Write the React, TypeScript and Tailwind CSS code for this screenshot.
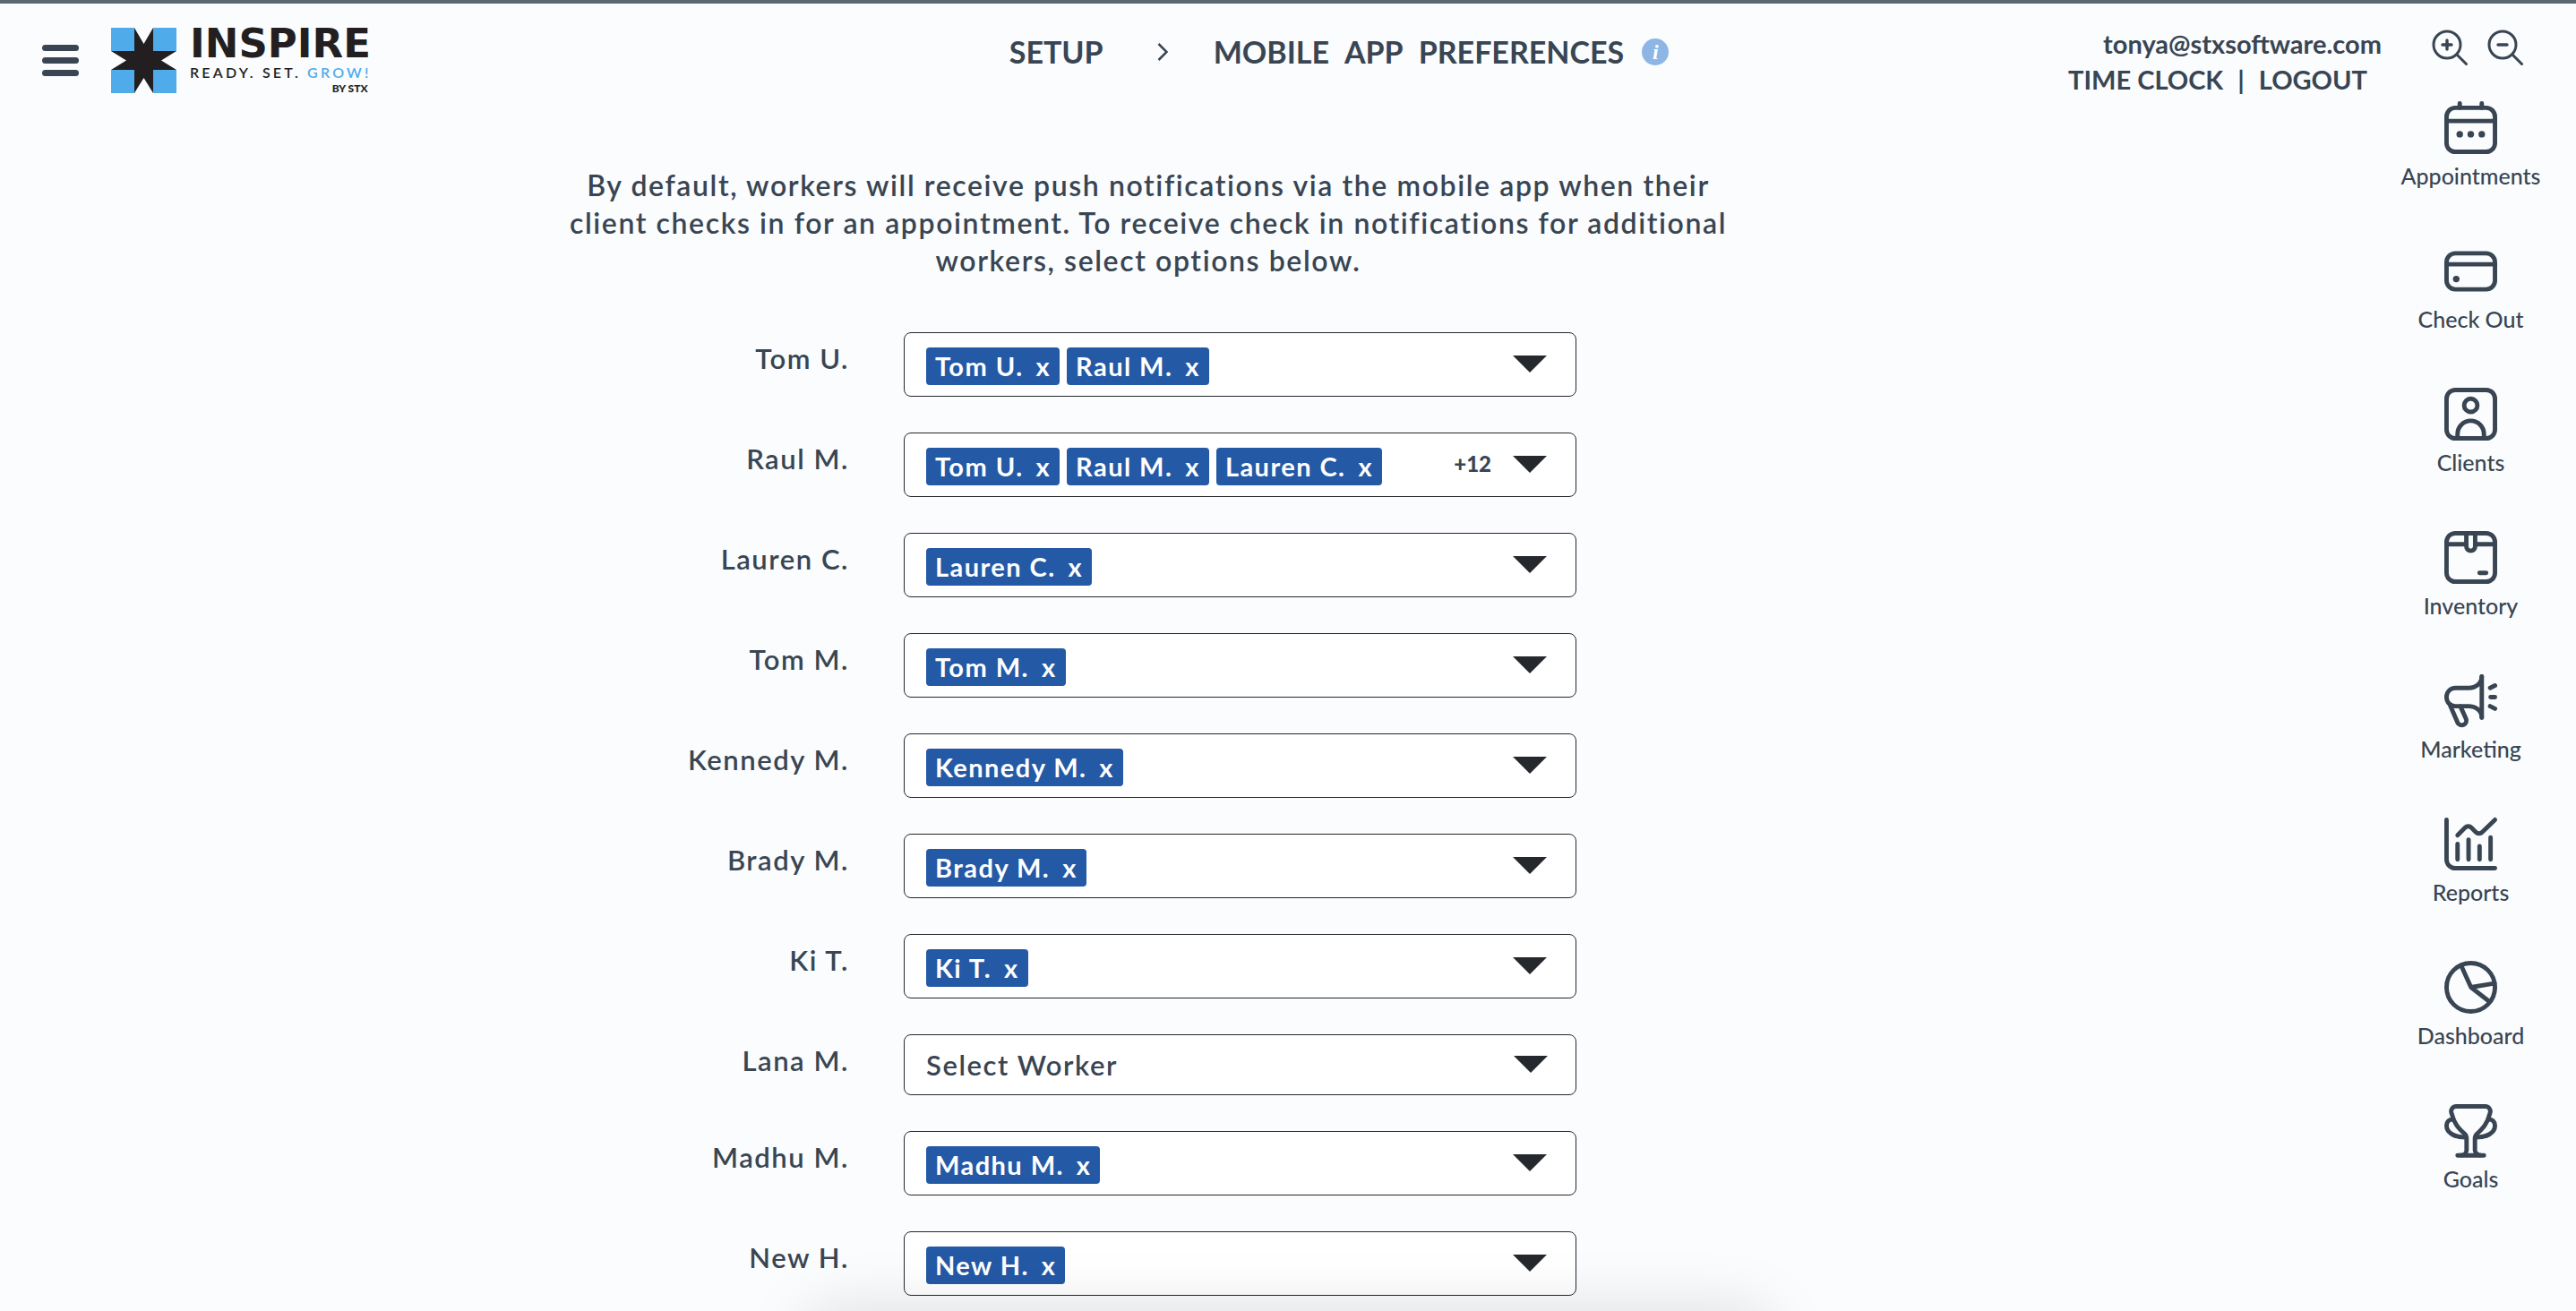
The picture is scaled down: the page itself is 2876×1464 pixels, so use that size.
import type { ReactNode } from "react";

type Worker = { name: string; tags: string[]; more?: number };

const workers: Worker[] = [
  { name: "Tom U.", tags: ["Tom U.", "Raul M."] },
  { name: "Raul M.", tags: ["Tom U.", "Raul M.", "Lauren C."], more: 12 },
  { name: "Lauren C.", tags: ["Lauren C."] },
  { name: "Tom M.", tags: ["Tom M."] },
  { name: "Kennedy M.", tags: ["Kennedy M."] },
  { name: "Brady M.", tags: ["Brady M."] },
  { name: "Ki T.", tags: ["Ki T."] },
  { name: "Lana M.", tags: [] },
  { name: "Madhu M.", tags: ["Madhu M."] },
  { name: "New H.", tags: ["New H."] },
];

const navItems: { label: string; icon: ReactNode }[] = [
  {
    label: "Appointments",
    icon: (
      <>
        <rect x="1" y="3" width="22" height="20" rx="4" />
        <path d="M1 9h22M7 1v2M17 1v2" />
        <g fill="currentColor" stroke="none">
          <circle cx="7" cy="15" r="1.5" />
          <circle cx="12" cy="15" r="1.5" />
          <circle cx="17" cy="15" r="1.5" />
        </g>
      </>
    ),
  },
  {
    label: "Check Out",
    icon: (
      <>
        <rect x="1" y="4" width="22" height="16.4" rx="4" />
        <path d="M1 9h22" />
        <circle cx="5.4" cy="15.7" r="1.5" fill="currentColor" stroke="none" />
      </>
    ),
  },
  {
    label: "Clients",
    icon: (
      <>
        <rect x="1" y="1" width="22" height="22" rx="4" />
        <circle cx="12" cy="8" r="3" />
        <path d="M6 23v-2a6 6 0 0 1 12 0v2" />
      </>
    ),
  },
  {
    label: "Inventory",
    icon: (
      <>
        <rect x="1" y="1" width="22" height="22" rx="4" />
        <path d="M1 6h9M14 6h9M10 1v6a2 2 0 0 0 4 0V1M16 19h3" />
      </>
    ),
  },
  {
    label: "Marketing",
    icon: (
      <>
        <path d="M17 1v18.7" />
        <path d="M17 1c0 3-2.6 5.2-6 5.2H5a4 4 0 0 0-4 4v.3a4 4 0 0 0 4 4h6c3.400 0 6 2.100 6 5" />
        <path d="M2.700 14.200l3.300 7.700a2.100 2.100 0 0 0 3.800-1.800L7.300 14.600" />
        <path d="M20.800 6.200l2.200-1.100M21 10.400h2M20.800 14.500l2.200 1.100" />
      </>
    ),
  },
  {
    label: "Reports",
    icon: (
      <>
        <path d="M1 1v18a4 4 0 0 0 4 4h18" />
        <path d="M6 12v7M11 10v9M16 13v6M21 9v10" />
        <path d="M6 8l3.400-3.400a2 2 0 0 1 2.900 0l2 2a2 2 0 0 0 2.900 0L23 1" />
      </>
    ),
  },
  {
    label: "Dashboard",
    icon: (
      <>
        <circle cx="12" cy="12" r="11" />
        <path d="M7.600 2l4.500 10 10.600-1.800M12.100 12l8.100 6.300" />
      </>
    ),
  },
  {
    label: "Goals",
    icon: (
      <>
        <path d="M7.700 23.200a2.400 2.400 0 0 0 2.400-2.400v-5.200a3 3 0 0 0-1-2.200C6.500 11 4.500 9 3.300 4.200A2.300 2.300 0 0 1 5.400 1h13.200a2.300 2.300 0 0 1 2.100 3.200C19.500 9 17.500 11 14.900 13.400a3 3 0 0 0-1 2.200v5.200a2.400 2.400 0 0 0 2.400 2.400" />
        <path d="M4 7C2.200 6.800 1 8 1 9.800c0 3.400 4 5.300 8.600 5.300M20 7c1.800-.2 3 1 3 2.800 0 3.400-4 5.300-8.600 5.300M6 23.300h12" />
      </>
    ),
  },
];

function LogoMark() {
  return (
    <svg viewBox="0 0 73 73" className="size-[73px] shrink-0" aria-hidden="true">
      <path
        fill="#231f20"
        d="M26 0l10.500 18L47 0v26h26L56 36.500 73 47H47v26L36.500 56 26 73V47H0l17-10.500L0 26h26z"
      />
      <path fill="#50abeb" d="M0 0h26v26H0zM47 0h26v26H47zM0 47h26v26H0zM47 47h26v26H47z" />
    </svg>
  );
}

function Magnifier({ plus }: { plus?: boolean }) {
  return (
    <svg
      viewBox="0 0 40 40"
      className="size-10"
      fill="none"
      stroke="currentColor"
      strokeWidth="3"
      strokeLinecap="round"
      aria-hidden="true"
    >
      <circle cx="17" cy="17" r="15" />
      <path d="M28 28l10.500 10.500" />
      <path strokeWidth="3.400" d={plus ? "M12 17h10M17 12v10" : "M12 17h10"} />
    </svg>
  );
}

function Triangle() {
  return (
    <svg viewBox="0 0 38 19" className="h-[19px] w-[38px]" fill="#25282d" aria-hidden="true">
      <path d="M0 0h38L19 19z" />
    </svg>
  );
}

function Tag({ name }: { name: string }) {
  return (
    <span className="flex h-[42px] shrink-0 items-center gap-[14px] rounded bg-[#2459a6] px-2.5 text-[29px] font-bold tracking-wider text-white">
      {name}
      <button type="button" aria-label={`Remove ${name}`}>
        x
      </button>
    </span>
  );
}

function WorkerRow({ worker, id }: { worker: Worker; id: string }) {
  const empty = worker.tags.length === 0;
  return (
    <div className="grid grid-cols-[324fr_751fr] gap-[61px] pr-[180px]">
      <label
        id={`${id}-label`}
        htmlFor={id}
        className="pt-2 text-right text-[31px] leading-[42px] font-semibold tracking-wider"
      >
        {worker.name}
      </label>
      {empty ? (
        <div className="relative">
          <select
            id={id}
            className="h-[68px] w-full appearance-none rounded-lg border border-[#25282d] bg-white px-6 text-[31px] font-semibold tracking-wider"
          >
            <option>Select Worker</option>
          </select>
          <span className="pointer-events-none absolute top-6 right-8">
            <Triangle />
          </span>
        </div>
      ) : (
        <div
          role="group"
          aria-labelledby={`${id}-label`}
          className="flex h-[72px] items-start gap-2 rounded-lg border border-[#25282d] bg-white pt-4 pr-8 pl-6"
        >
          {worker.tags.map((tag) => (
            <Tag key={tag} name={tag} />
          ))}
          <div className="ml-auto flex items-center gap-6">
            {worker.more && <span className="text-2xl leading-9 font-black">+{worker.more}</span>}
            <button
              id={id}
              type="button"
              aria-label={`Choose workers for ${worker.name}`}
              className="flex h-9 items-center"
            >
              <Triangle />
            </button>
          </div>
        </div>
      )}
    </div>
  );
}

export default function App() {
  return (
    <div className="relative flex min-h-screen flex-col overflow-hidden border-t-4 border-[#5a6971] bg-[#fafcfe] font-['Lato',sans-serif] text-[#394552]">
      <header className="grid grid-cols-[1fr_auto_1fr] items-start">
        <div className="flex items-start gap-9 pt-[27px] pl-[47px]">
          <button type="button" aria-label="Open menu" className="flex w-[41px] flex-col gap-[7px] pt-[19px]">
            <span className="h-[7px] rounded-sm bg-[#394552]" />
            <span className="h-[7px] rounded-sm bg-[#394552]" />
            <span className="h-[7px] rounded-sm bg-[#394552]" />
          </button>
          <a href="#home" className="flex gap-[15px] text-[#231f20]">
            <LogoMark />
            <span className="flex flex-col">
              <span className="font-['DejaVu_Sans',sans-serif] text-[45px] leading-9 font-bold">INSPIRE</span>
              <span className="mt-1 text-base leading-5 font-semibold tracking-[0.2em]">
                READY. SET. <span className="text-[#50abeb]">GROW!</span>
              </span>
              <span className="pr-1 text-right text-xs leading-4 font-black">BY STX</span>
            </span>
          </a>
        </div>
        <nav
          aria-label="Breadcrumb"
          className="flex items-center pt-[30px] pl-[114px] text-[34px] leading-[48px] font-bold"
        >
          <a href="#setup">SETUP</a>
          <svg
            viewBox="0 0 12 20"
            className="mr-[51px] ml-[60px] h-5 w-3"
            fill="none"
            stroke="currentColor"
            strokeWidth="2.500"
            aria-hidden="true"
          >
            <path d="M1.500 1l9 9-9 9" />
          </svg>
          <h1 className="flex gap-[17px]">
            <span>MOBILE</span> <span>APP</span> <span>PREFERENCES</span>
          </h1>
          <button
            type="button"
            aria-label="Information"
            className="ml-5 flex size-[30px] items-center justify-center rounded-full bg-[#8db6e4] font-['Liberation_Serif',serif] text-2xl leading-none font-bold text-white italic"
          >
            i
          </button>
        </nav>
        <div className="flex items-start justify-end gap-14 pr-[59px]">
          <div className="pt-[25px] text-right text-[29px] leading-10 font-bold">
            <p>tonya@stxsoftware.com</p>
            <p className="flex justify-end gap-4 pr-4">
              <a href="#time-clock">TIME CLOCK</a>
              <span>|</span>
              <a href="#logout">LOGOUT</a>
            </p>
          </div>
          <div className="flex gap-[22px] pt-[29px]">
            <button type="button" aria-label="Zoom in">
              <Magnifier plus />
            </button>
            <button type="button" aria-label="Zoom out">
              <Magnifier />
            </button>
          </div>
        </div>
      </header>

      <div className="flex flex-1 items-start">
        <main className="flex-1 pt-[77px] pr-[77px] pb-3">
          <div className="mx-auto max-w-[1340px] px-3">
            <p className="text-center text-[32px] leading-[42px] font-semibold tracking-wider">
              By default, workers will receive push notifications via the mobile app when their client checks in for an
              appointment. To receive check in notifications for additional workers, select options below.
            </p>
            <form className="mt-[59px] flex flex-col gap-10">
              {workers.map((worker, index) => (
                <WorkerRow key={worker.name} worker={worker} id={`worker-${index}`} />
              ))}
            </form>
          </div>
        </main>
        <nav aria-label="Main" className="flex w-[235px] shrink-0 flex-col pt-1">
          {navItems.map((item) => (
            <a
              key={item.label}
              href={`#${item.label}`}
              className="flex h-40 flex-col items-center gap-[7px] text-[25px] leading-[34px] font-medium"
            >
              <svg
                viewBox="0 0 24 24"
                className="size-[59px] overflow-visible"
                fill="none"
                stroke="currentColor"
                strokeWidth="2"
                strokeLinecap="round"
                strokeLinejoin="round"
                aria-hidden="true"
              >
                {item.icon}
              </svg>
              {item.label}
            </a>
          ))}
        </nav>
      </div>

      <div className="pointer-events-none absolute inset-x-[32%] top-full mt-4 h-10 shadow-[0_0_70px_16px_rgba(0,0,0,0.13)]" />
    </div>
  );
}
